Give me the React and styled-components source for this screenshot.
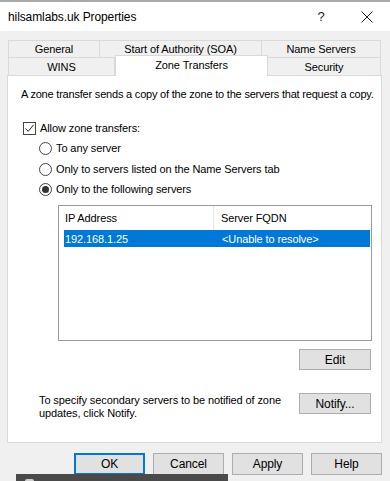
import React from 'react';
import styled, { createGlobalStyle } from 'styled-components';

const Global = createGlobalStyle`
  html, body {
    margin: 0;
    padding: 0;
    background: #f0f0f0;
  }
  body {
    font-family: "Liberation Sans", Arial, sans-serif;
    font-size: 11px;
    letter-spacing: -0.1px;
    color: #000;
  }
`;

const Window = styled.div`
  position: relative;
  width: 390px;
  height: 481px;
  overflow: hidden;
  background: #f0f0f0;
  border-top: 2px solid #a9a9a9;
  box-sizing: border-box;
`;

const TitleBar = styled.div`
  display: flex;
  align-items: center;
  height: 29px;
  padding-left: 8px;
  background: #fff;
  font-size: 12px;
`;

const Title = styled.div`
  flex: 1;
`;

const TitleButton = styled.div`
  width: 46px;
  display: flex;
  justify-content: center;
  font-size: 13px;
  color: #222;
`;

const Body = styled.div`
  padding: 9px 8px 0 7px;
`;

const TabRow = styled.div`
  display: flex;
  height: ${p => p.$h}px;
  padding-left: 1px;
`;

const Tab = styled.div`
  position: relative;
  width: ${p => p.$w}px;
  display: flex;
  align-items: center;
  justify-content: center;
  box-sizing: border-box;
  border: 1px solid #d9d9d9;
  border-bottom: none;
  border-left: ${p => (p.$first ? '1px solid #d9d9d9' : 'none')};
  background: #f0f0f0;
`;

const ActiveTab = styled(Tab)`
  background: #fff;
  border-left: 1px solid #d9d9d9;
  margin-top: -2px;
  height: 21px;
  z-index: 2;
  align-items: flex-start;
  padding-top: 3px;
`;

const Panel = styled.div`
  position: relative;
  height: 368px;
  background: #fff;
  border: 1px solid #d9d9d9;
  box-sizing: border-box;
  padding: 11px 0 0 13px;
`;

const Line = styled.div`
  line-height: 15px;
  white-space: nowrap;
  letter-spacing: -0.2px;
`;

const OptionRow = styled.label`
  display: flex;
  align-items: center;
  gap: 4px;
  height: 20px;
  margin-left: ${p => p.$indent || 0}px;
  margin-top: ${p => p.$mt || 0}px;
`;

const Box = styled.span`
  width: 13px;
  height: 13px;
  box-sizing: border-box;
  border: 1px solid #444;
  background: #fff;
  display: flex;
  align-items: center;
  justify-content: center;
`;

const Radio = styled.span`
  width: 13px;
  height: 13px;
  box-sizing: border-box;
  border: 1px solid #444;
  border-radius: 50%;
  background: #fff;
  display: flex;
  align-items: center;
  justify-content: center;
  &::after {
    content: '';
    display: ${p => (p.$on ? 'block' : 'none')};
    width: 7px;
    height: 7px;
    border-radius: 50%;
    background: #333;
  }
`;

const ListBox = styled.div`
  margin: 6px 0 0 37px;
  width: 314px;
  height: 136px;
  box-sizing: border-box;
  border: 1px solid #9a9a9a;
  background: #fff;
  padding: 0 1px 0 5px;
`;

const HeaderRow = styled.div`
  display: flex;
  height: 24px;
  align-items: center;
`;

const HeaderCell = styled.div`
  width: ${p => p.$w}px;
  height: 100%;
  display: flex;
  align-items: center;
  padding-left: ${p => p.$pl}px;
  box-sizing: border-box;
  border-right: ${p => (p.$div ? '1px solid #e5e5e5' : 'none')};
`;

const DataRow = styled.div`
  display: flex;
  height: 17px;
  align-items: center;
  background: ${p => (p.$selected ? '#0078d7' : 'transparent')};
  color: ${p => (p.$selected ? '#fff' : '#000')};
`;

const DataCell = styled.div`
  width: ${p => p.$w}px;
  padding-left: ${p => p.$pl}px;
  box-sizing: border-box;
`;

const ButtonLine = styled.div`
  display: flex;
  justify-content: flex-end;
  align-items: ${p => p.$align || 'center'};
  margin-top: ${p => p.$mt || 0}px;
  padding-right: 10px;
`;

const Button = styled.div`
  width: ${p => p.$w || 72}px;
  height: ${p => p.$h || 21}px;
  box-sizing: border-box;
  display: flex;
  align-items: center;
  justify-content: center;
  background: #e1e1e1;
  border: 1px solid ${p => (p.$default ? '#0078d7' : '#adadad')};
  box-shadow: ${p => (p.$default ? 'inset 0 0 0 1px #0078d7' : 'none')};
  font-size: 12px;
`;

const NotifyText = styled.div`
  flex: 1;
  line-height: 13px;
  padding-left: 18px;
  margin-top: 1px;
  white-space: nowrap;
`;

const DialogButtons = styled.div`
  display: flex;
  justify-content: flex-end;
  gap: 8px;
  margin-top: 10px;
`;

const Taskbar = styled.div`
  position: absolute;
  left: 16px;
  top: 472px;
  width: 212px;
  height: 20px;
  background: #4a4a4a;
  &::after {
    content: '';
    position: absolute;
    left: 9px;
    top: 5px;
    width: 9px;
    height: 8px;
    border-radius: 2px;
    background: #cfcfcf;
  }
`;

const tabsTop = [
  { label: 'General', w: 92, first: true },
  { label: 'Start of Authority (SOA)', w: 162 },
  { label: 'Name Servers', w: 119 },
];

export default function App() {
  return (
    <Window>
      <Global />
      <TitleBar>
        <Title>hilsamlabs.uk Properties</Title>
        <TitleButton>?</TitleButton>
        <TitleButton>
          <svg width="12" height="12" viewBox="0 0 12 12">
            <path d="M0.5 0.5 L11.5 11.5 M11.5 0.5 L0.5 11.5" stroke="#222" strokeWidth="1" />
          </svg>
        </TitleButton>
      </TitleBar>
      <Body>
        <TabRow $h={17}>
          {tabsTop.map(t => (
            <Tab key={t.label} $w={t.w} $first={t.first}>{t.label}</Tab>
          ))}
        </TabRow>
        <TabRow $h={18}>
          <Tab $w={107} $first>WINS</Tab>
          <ActiveTab $w={153}>Zone Transfers</ActiveTab>
          <Tab $w={113}>Security</Tab>
        </TabRow>
        <Panel>
          <Line>A zone transfer sends a copy of the zone to the servers that request a copy.</Line>
          <OptionRow $indent={2} $mt={16}>
            <Box>
              <svg width="11" height="11" viewBox="0 0 11 11">
                <path d="M1.5 5.5 L4.2 8.3 L9.6 1.8" fill="none" stroke="#222" strokeWidth="1" />
              </svg>
            </Box>
            Allow zone transfers:
          </OptionRow>
          <OptionRow $indent={18}>
            <Radio />
            To any server
          </OptionRow>
          <OptionRow $indent={18} $mt={1}>
            <Radio />
            Only to servers listed on the Name Servers tab
          </OptionRow>
          <OptionRow $indent={18}>
            <Radio $on />
            Only to the following servers
          </OptionRow>
          <ListBox>
            <HeaderRow>
              <HeaderCell $w={150} $pl={1} $div>IP Address</HeaderCell>
              <HeaderCell $w={150} $pl={7}>Server FQDN</HeaderCell>
            </HeaderRow>
            <DataRow $selected>
              <DataCell $w={150} $pl={1}>192.168.1.25</DataCell>
              <DataCell $w={150} $pl={8}>&lt;Unable to resolve&gt;</DataCell>
            </DataRow>
          </ListBox>
          <ButtonLine $mt={8}>
            <Button>Edit</Button>
          </ButtonLine>
          <ButtonLine $mt={23} $align="flex-start">
            <NotifyText>
              To specify secondary servers to be notified of zone
              <br />
              updates, click Notify.
            </NotifyText>
            <Button>Notify...</Button>
          </ButtonLine>
        </Panel>
        <DialogButtons>
          <Button $w={71} $h={22} $default>OK</Button>
          <Button $w={71} $h={22}>Cancel</Button>
          <Button $w={71} $h={22}>Apply</Button>
          <Button $w={71} $h={22}>Help</Button>
        </DialogButtons>
      </Body>
      <Taskbar />
    </Window>
  );
}
